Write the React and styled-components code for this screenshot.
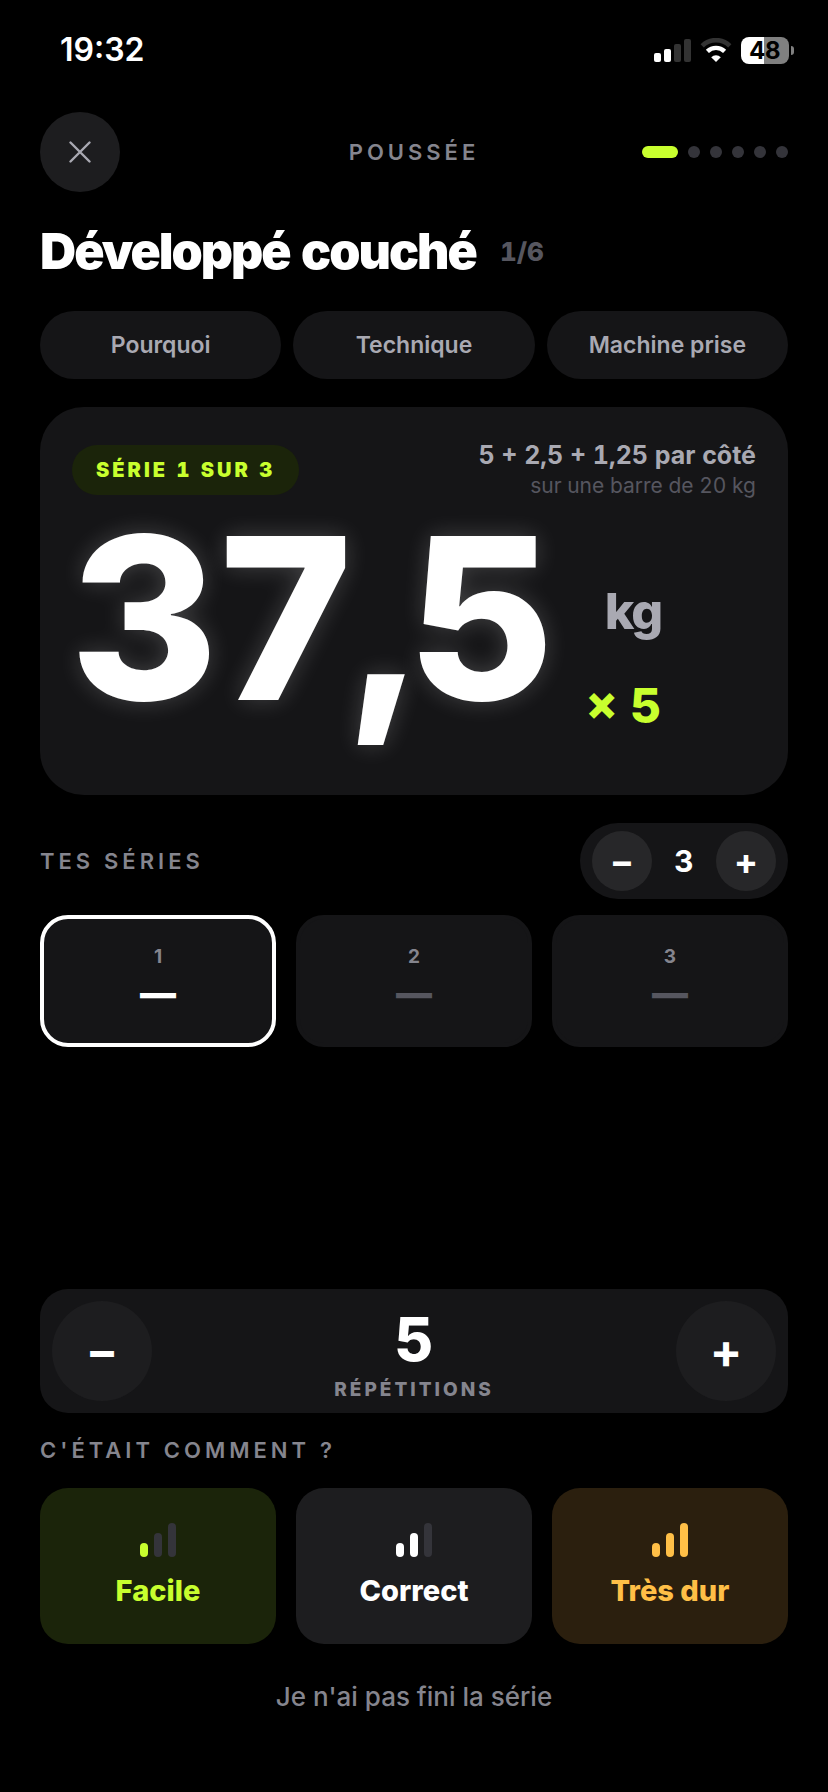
import React, { memo, useState } from 'react'
import styled, { createGlobalStyle } from 'styled-components'

const C = {
  bg: '#000000',
  card: '#151517',
  raised: '#1d1d1f',
  raisedHigh: '#272729',
  off: '#34343a',
  dim: '#56565f',
  muted: '#85858e',
  soft: '#a9a9b2',
  lime: '#c8ff2e',
  limeBg: '#1b240a',
  amber: '#ffbf47',
  amberBg: '#2b1f0e',
}

const GlobalStyle = createGlobalStyle`
  * {
    box-sizing: border-box;
  }
  body {
    margin: 0;
    background: ${C.bg};
    color: #fff;
    font-family: Inter, 'Liberation Sans', sans-serif;
    font-variant-numeric: tabular-nums;
  }
  button {
    margin: 0;
    padding: 0;
    border: 0;
    color: inherit;
    font-family: inherit;
    cursor: pointer;
  }
`

const Page = styled.div`
  display: flex;
  flex-direction: column;
  min-height: 100vh;
`
const StatusBar = styled.div`
  display: flex;
  align-items: center;
  justify-content: space-between;
  height: 100px;
  padding: 0 34px 0 60px;
`
const Clock = styled.time`
  font-size: 32px;
  font-weight: 600;
  font-variant-numeric: normal;
  line-height: 40px;
`
const StatusIcons = styled.div`
  display: flex;
  align-items: center;
  gap: 9px;
`
const Battery = styled.div`
  display: flex;
  align-items: center;
  gap: 2px;
`
const BatteryBody = styled.div`
  width: 48px;
  border-radius: 8px;
  background: linear-gradient(90deg, #fff ${props => props.$level}%, #808080 ${props => props.$level}%);
  color: #000;
  font-size: 24px;
  font-weight: 700;
  line-height: 27px;
  text-align: center;
`
const BatteryTip = styled.div`
  width: 3px;
  height: 9px;
  border-radius: 0 4px 4px 0;
  background: #808080;
`

const Main = styled.main`
  display: flex;
  flex: 1;
  flex-direction: column;
  padding: 12px 40px 64px;
`
const Header = styled.header`
  display: grid;
  grid-template-columns: 1fr auto 1fr;
  align-items: center;
`
const RoundButton = styled.button`
  display: flex;
  flex: none;
  align-items: center;
  justify-content: center;
  width: ${props => props.$size}px;
  height: ${props => props.$size}px;
  border-radius: 50%;
  background: ${props => props.$bg || C.raised};
  font-size: ${props => props.$font || 36}px;
  font-weight: 700;
  line-height: 1;
`
const Overline = styled.h2`
  margin: 0;
  color: ${C.muted};
  font-size: 22px;
  font-weight: 600;
  letter-spacing: 4px;
  line-height: 27px;
`
const Progress = styled.div`
  display: flex;
  justify-content: flex-end;
  gap: 10px;
`
const ProgressDot = styled.span`
  width: ${props => (props.$active ? 36 : 12)}px;
  height: 12px;
  border-radius: 6px;
  background: ${props => (props.$active ? C.lime : C.off)};
`

const TitleRow = styled.div`
  display: flex;
  align-items: center;
  gap: 24px;
  margin: 28px 0;
`
const Title = styled.h1`
  margin: 0;
  font-size: 50px;
  font-weight: 900;
  letter-spacing: -2px;
  line-height: 63px;
`
const TitleCount = styled.span`
  color: ${C.dim};
  font-size: 26px;
  font-weight: 800;
`

const Chips = styled.div`
  display: grid;
  grid-template-columns: repeat(3, 1fr);
  gap: 12px;
`
const Chip = styled.button`
  height: 68px;
  border-radius: 34px;
  background: ${C.card};
  color: ${C.soft};
  font-size: 23px;
  font-weight: 600;
`

const LoadCard = styled.section`
  margin: 28px 0;
  padding: 32px 32px 64px;
  border-radius: 44px;
  background: ${C.card};
`
const LoadHead = styled.div`
  display: flex;
  align-items: center;
  justify-content: space-between;
`
const Badge = styled.span`
  padding: 0 24px;
  border-radius: 25px;
  background: ${C.limeBg};
  color: ${C.lime};
  font-size: 20px;
  font-weight: 900;
  letter-spacing: 3px;
  line-height: 50px;
`
const Plates = styled.div`
  color: ${C.soft};
  font-size: 25px;
  font-weight: 700;
  line-height: 32px;
  text-align: right;
`
const BarNote = styled.div`
  color: ${C.dim};
  font-size: 21px;
  font-weight: 400;
  line-height: 30px;
`
const LoadRow = styled.div`
  display: flex;
  align-items: flex-end;
  gap: 36px;
  margin-top: 4px;
`
const LoadValue = styled.div`
  font-size: 226px;
  font-weight: 800;
  letter-spacing: -5px;
  line-height: 226px;
  text-shadow: 0 0 24px rgba(255, 255, 255, 0.2);
`
const LoadSide = styled.div`
  display: flex;
  flex-direction: column;
  align-items: flex-end;
  gap: 40px;
`
const Unit = styled.span`
  color: ${C.soft};
  font-size: 50px;
  font-weight: 800;
  letter-spacing: -2px;
  line-height: 60px;
`
const Times = styled.span`
  color: ${C.lime};
  font-size: 48px;
  font-weight: 800;
  line-height: 50px;
`

const SetsHead = styled.div`
  display: flex;
  align-items: center;
  justify-content: space-between;
  margin-bottom: 16px;
`
const SetsStepper = styled.div`
  display: flex;
  align-items: center;
  padding: 8px 12px;
  border-radius: 38px;
  background: ${C.card};
`
const SetsCount = styled.output`
  width: 64px;
  font-size: 30px;
  font-weight: 700;
  text-align: center;
`
const Tiles = styled.div`
  display: grid;
  grid-template-columns: repeat(3, 1fr);
  gap: 20px;
`
const SetTile = styled.button`
  display: flex;
  flex-direction: column;
  align-items: center;
  justify-content: center;
  height: 132px;
  border: 4px solid ${props => (props.$active ? '#fff' : C.card)};
  border-radius: 28px;
  background: ${C.card};
  color: ${props => (props.$active ? '#fff' : C.dim)};
  font-size: 36px;
  font-weight: 900;
  line-height: 48px;
`
const SetIndex = styled.span`
  color: ${C.muted};
  font-size: 19px;
  font-weight: 700;
  line-height: 24px;
`

const Bottom = styled.section`
  display: flex;
  flex-direction: column;
  margin-top: auto;
`
const RepsPanel = styled.div`
  display: flex;
  align-items: center;
  justify-content: space-between;
  margin-bottom: 24px;
  padding: 12px;
  border-radius: 28px;
  background: ${C.card};
`
const Reps = styled.div`
  display: flex;
  flex-direction: column;
  align-items: center;
  gap: 12px;
  padding-top: 10px;
`
const RepsCount = styled.output`
  font-size: 60px;
  font-weight: 800;
  line-height: 56px;
`
const RepsLabel = styled.span`
  color: ${C.muted};
  font-size: 19px;
  font-weight: 800;
  letter-spacing: 3px;
  line-height: 22px;
`
const EffortTiles = styled(Tiles)`
  margin: 24px 0 20px;
`
const EffortButton = styled.button`
  display: flex;
  flex-direction: column;
  align-items: center;
  justify-content: center;
  gap: 16px;
  height: 156px;
  border-radius: 28px;
  background: ${props => props.$bg};
  color: ${props => props.$color};
  font-size: 29px;
  font-weight: 800;
  line-height: 36px;
`
const Bars = styled.span`
  display: flex;
  align-items: flex-end;
  gap: 6px;
`
const Bar = styled.span`
  width: 8px;
  height: ${props => props.$height}px;
  border-radius: 4px;
  background: ${props => (props.$on ? 'currentColor' : C.off)};
`
const SkipButton = styled.button`
  align-self: center;
  height: 64px;
  background: none;
  color: ${C.muted};
  font-size: 26px;
  font-weight: 500;
`

const EFFORTS = [
  { label: 'Facile', level: 1, color: C.lime, bg: C.limeBg },
  { label: 'Correct', level: 2, color: '#fff', bg: C.raised },
  { label: 'Très dur', level: 3, color: C.amber, bg: C.amberBg },
]

const SignalIcon = () => (
  <svg width="37" height="23" viewBox="0 0 37 23" fill="#fff" aria-hidden="true">
    <rect x="0" y="14" width="7" height="9" rx="2" />
    <rect x="10" y="10" width="7" height="13" rx="2" />
    <rect x="20" y="5" width="7" height="18" rx="2" fill="#333" />
    <rect x="30" y="0" width="7" height="23" rx="2" fill="#333" />
  </svg>
)

const WifiIcon = () => (
  <svg width="32" height="24" viewBox="0 0 32 24" aria-hidden="true">
    <path d="M2.2 7.8a19.6 19.6 0 0 1 27.6 0" fill="none" stroke="#333" strokeWidth="4.6" />
    <path d="M7.4 13.4a12.3 12.3 0 0 1 17.2 0" fill="none" stroke="#fff" strokeWidth="4.4" />
    <path d="M16 24l-4.8-4.8a6.9 6.9 0 0 1 9.6 0z" fill="#fff" />
  </svg>
)

const CloseIcon = () => (
  <svg width="22" height="22" viewBox="0 0 22 22" aria-hidden="true">
    <path d="M1.5 1.5l19 19M20.5 1.5l-19 19" stroke={C.soft} strokeWidth="2.4" strokeLinecap="round" />
  </svg>
)

const Status = memo(() => (
  <StatusBar>
    <Clock>19:32</Clock>
    <StatusIcons>
      <SignalIcon />
      <WifiIcon />
      <Battery>
        <BatteryBody $level={48}>48</BatteryBody>
        <BatteryTip />
      </Battery>
    </StatusIcons>
  </StatusBar>
))

const Effort = memo(({ label, level, color, bg }) => (
  <EffortButton $color={color} $bg={bg}>
    <Bars>
      {[14, 24, 34].map((height, i) => (
        <Bar key={height} $height={height} $on={i < level} />
      ))}
    </Bars>
    {label}
  </EffortButton>
))

const App = () => {
  const [sets, setSets] = useState(3)
  const [reps, setReps] = useState(5)
  const [current, setCurrent] = useState(1)

  return (
    <Page>
      <GlobalStyle />
      <Status />
      <Main>
        <Header>
          <RoundButton $size={80} aria-label="Fermer"><CloseIcon /></RoundButton>
          <Overline>POUSSÉE</Overline>
          <Progress>
            {[1, 2, 3, 4, 5, 6].map(step => <ProgressDot key={step} $active={step === 1} />)}
          </Progress>
        </Header>
        <TitleRow>
          <Title>Développé couché</Title>
          <TitleCount>1/6</TitleCount>
        </TitleRow>
        <Chips>
          <Chip>Pourquoi</Chip>
          <Chip>Technique</Chip>
          <Chip>Machine prise</Chip>
        </Chips>
        <LoadCard>
          <LoadHead>
            <Badge>SÉRIE {current} SUR {sets}</Badge>
            <Plates>
              5 + 2,5 + 1,25 par côté
              <BarNote>sur une barre de 20 kg</BarNote>
            </Plates>
          </LoadHead>
          <LoadRow>
            <LoadValue>37,5</LoadValue>
            <LoadSide>
              <Unit>kg</Unit>
              <Times>× {reps}</Times>
            </LoadSide>
          </LoadRow>
        </LoadCard>
        <SetsHead>
          <Overline>TES SÉRIES</Overline>
          <SetsStepper>
            <RoundButton $size={60} $bg={C.raisedHigh} aria-label="Moins de séries" onClick={() => setSets(Math.max(1, sets - 1))}>−</RoundButton>
            <SetsCount>{sets}</SetsCount>
            <RoundButton $size={60} $bg={C.raisedHigh} aria-label="Plus de séries" onClick={() => setSets(sets + 1)}>+</RoundButton>
          </SetsStepper>
        </SetsHead>
        <Tiles>
          {Array.from({ length: sets }, (_, i) => i + 1).map(n => (
            <SetTile key={n} $active={n === current} onClick={() => setCurrent(n)}>
              <SetIndex>{n}</SetIndex>
              —
            </SetTile>
          ))}
        </Tiles>
        <Bottom>
          <RepsPanel>
            <RoundButton $size={100} $font={48} aria-label="Moins de répétitions" onClick={() => setReps(Math.max(0, reps - 1))}>−</RoundButton>
            <Reps>
              <RepsCount>{reps}</RepsCount>
              <RepsLabel>RÉPÉTITIONS</RepsLabel>
            </Reps>
            <RoundButton $size={100} $font={48} aria-label="Plus de répétitions" onClick={() => setReps(reps + 1)}>+</RoundButton>
          </RepsPanel>
          <Overline>C'ÉTAIT COMMENT ?</Overline>
          <EffortTiles>
            {EFFORTS.map(effort => <Effort key={effort.label} {...effort} />)}
          </EffortTiles>
          <SkipButton>Je n'ai pas fini la série</SkipButton>
        </Bottom>
      </Main>
    </Page>
  )
}

export default App
